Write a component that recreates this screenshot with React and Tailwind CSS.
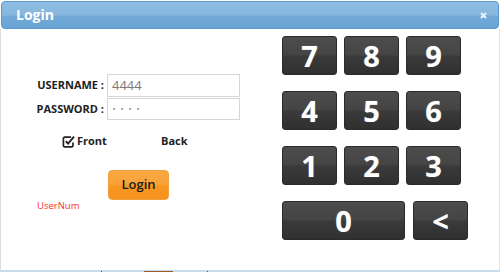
import React from "react";

const Key = ({ children, w = "w-[55px]" }) => (
  <div
    className={`${w} h-[39px] rounded-[3px] border border-[#2b2b2b] bg-[linear-gradient(to_bottom,#4d4d4d_0%,#444_48%,#3a3a3a_52%,#303030_100%)] flex items-center justify-center text-white text-[29px] font-bold leading-none [font-family:'Open_Sans',sans-serif] [text-shadow:0_0_1px_rgba(255,255,255,0.4)]`}
  >
    {children}
  </div>
);

export default function App() {
  return (
    <div className="relative w-[500px] h-[272px] bg-white overflow-hidden [font-family:'Open_Sans',sans-serif]">
      <div className="absolute left-0 top-[29px] bottom-[2px] w-[1px] bg-[#dcdcdc]" />
      <div className="absolute right-0 top-[29px] bottom-[2px] w-[1px] bg-[#e4e4e4]" />
      {/* title bar */}
      <div className="mx-[1px] mt-[1px] h-[28px] rounded-[4px] border border-[#5b98cd] bg-[linear-gradient(to_bottom,#8fbde2_0%,#86b6dd_50%,#72aad8_56%,#68a3d5_100%)] flex items-center justify-between pl-[14px] pr-[11px]">
        <span className="text-white text-[14px] font-bold leading-none">Login</span>
        <svg width="7" height="7" viewBox="0 0 7 7">
          <path d="M1 1L6 6M6 1L1 6" stroke="#eef4fa" strokeWidth="1.8" />
        </svg>
      </div>

      <div className="flex h-[239px]">
        {/* left form */}
        <div className="w-[282px] pt-[45px] flex flex-col">
          <div className="flex items-center h-[23px]">
            <span className="w-[106px] pr-[2px] text-right text-[11px] font-bold text-[#222]">USERNAME :</span>
            <div className="w-[133px] h-[23px] border border-[#d6d6d6] flex items-center pl-[4px] text-[13px] text-[#7a7a7a] ml-[1px]">4444</div>
          </div>
          <div className="flex items-center h-[22px] mt-[1px]">
            <span className="w-[106px] pr-[2px] text-right text-[11px] font-bold text-[#222]">PASSWORD :</span>
            <div className="w-[133px] h-[22px] border border-[#d6d6d6] flex items-center gap-[6px] pl-[5px] ml-[1px]">
              <span className="w-[2px] h-[2px] rounded-full bg-[#888]" />
              <span className="w-[2px] h-[2px] rounded-full bg-[#888]" />
              <span className="w-[2px] h-[2px] rounded-full bg-[#888]" />
              <span className="w-[2px] h-[2px] rounded-full bg-[#888]" />
            </div>
          </div>
          <div className="flex items-center mt-[13px] h-[16px]">
            <div className="flex items-center ml-[62px] w-[99px]">
              <svg width="13" height="13" viewBox="0 0 13 13" className="mr-[2px]">
                <path d="M9 2.2H2.6A1.2 1.2 0 0 0 1.4 3.4v7.2a1.2 1.2 0 0 0 1.2 1.2h7.2a1.2 1.2 0 0 0 1.2-1.2V7.5" fill="none" stroke="#222" strokeWidth="1.7" />
                <path d="M3.8 6.2l2.3 2.4L12 1.6" fill="none" stroke="#222" strokeWidth="2" />
              </svg>
              <span className="text-[11px] font-bold text-[#222]">Front</span>
            </div>
            <span className="text-[11px] font-bold text-[#222]">Back</span>
          </div>
          <div className="ml-[108px] mt-[21px] w-[61px] h-[30px] rounded-[4px] border border-[#f0a040] bg-[linear-gradient(to_bottom,#faa840_0%,#f9a23a_45%,#f8961f_55%,#f7931c_100%)] flex items-center justify-center text-[13px] font-semibold text-[#1a1a1a]">
            Login
          </div>
          <span className="ml-[37px] mt-[0px] text-[9.5px] leading-[12px] text-[#ff3030]">UserNum</span>
        </div>

        {/* keypad */}
        <div className="pt-[7px] flex flex-col gap-[16px]">
          <div className="flex gap-[7px]">
            <Key>7</Key>
            <Key>8</Key>
            <Key>9</Key>
          </div>
          <div className="flex gap-[7px]">
            <Key>4</Key>
            <Key>5</Key>
            <Key>6</Key>
          </div>
          <div className="flex gap-[7px]">
            <Key>1</Key>
            <Key>2</Key>
            <Key>3</Key>
          </div>
          <div className="flex gap-[8px]">
            <Key w="w-[123px]">0</Key>
            <Key>&lt;</Key>
          </div>
        </div>
      </div>

      {/* bottom edge */}
      <div className="absolute left-0 right-0 bottom-0 h-[2px] bg-[#c9dcee]">
        <div className="absolute left-[101px] bottom-0 w-[1px] h-[1px] bg-[#555]" />
        <div className="absolute left-[144px] bottom-0 w-[29px] h-[1px] bg-[#9a5a2a]" />
        <div className="absolute left-[207px] bottom-0 w-[1px] h-[1px] bg-[#555]" />
      </div>
    </div>
  );
}
